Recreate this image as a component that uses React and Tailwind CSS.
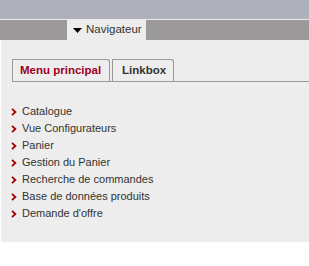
import React from "react";

const ITEMS = [
  "Catalogue",
  "Vue Configurateurs",
  "Panier",
  "Gestion du Panier",
  "Recherche de commandes",
  "Base de données produits",
  "Demande d'offre",
];

function Chevron() {
  return (
    <svg width="6" height="8" viewBox="0 0 6 8" className="flex-shrink-0">
      <path d="M1 0.8 L4.4 4 L1 7.2" fill="none" stroke="#a00000" strokeWidth="1.8" />
    </svg>
  );
}

export default function App() {
  return (
    <div className="w-[309px] h-[266px] bg-white text-[11px] text-[#333] font-['Liberation_Sans',Arial,sans-serif]">
      <div className="h-[19px] bg-[#aeb1bb]" />
      <div className="h-px bg-[#e8e8ea]" />
      <div className="h-[20px] bg-[#9b9999] flex pl-[67px]">
        <div className="w-[79px] bg-[#ededed] flex items-center gap-[4px] pl-[6px] text-[11.5px]">
          <svg width="9" height="5" viewBox="0 0 9 5"><path d="M0 0 H9 L4.5 5 Z" fill="#000" /></svg>
          <span>Navigateur</span>
        </div>
      </div>

      <div className="ml-px h-[202px] bg-[#ededed] pt-[19px]">
        <div className="ml-[11px] flex items-end gap-[2px] border-b border-[#999] h-[23px] text-[11.5px]">
          <div className="h-[22px] w-[98px] border border-b-0 border-[#999] rounded-tr-[3px] flex items-center pl-[7px] font-bold text-[#a0001e]">
            Menu principal
          </div>
          <div className="h-[22px] w-[62px] border border-b-0 border-[#999] rounded-tr-[3px] flex items-center pl-[9px] font-bold text-[#333]">
            Linkbox
          </div>
        </div>

        <ul className="mt-[21px] pl-[10px]">
          {ITEMS.map((item) => (
            <li key={item} className="h-[17px] flex items-center gap-[5px]">
              <Chevron />
              <span>{item}</span>
            </li>
          ))}
        </ul>
      </div>
    </div>
  );
}
